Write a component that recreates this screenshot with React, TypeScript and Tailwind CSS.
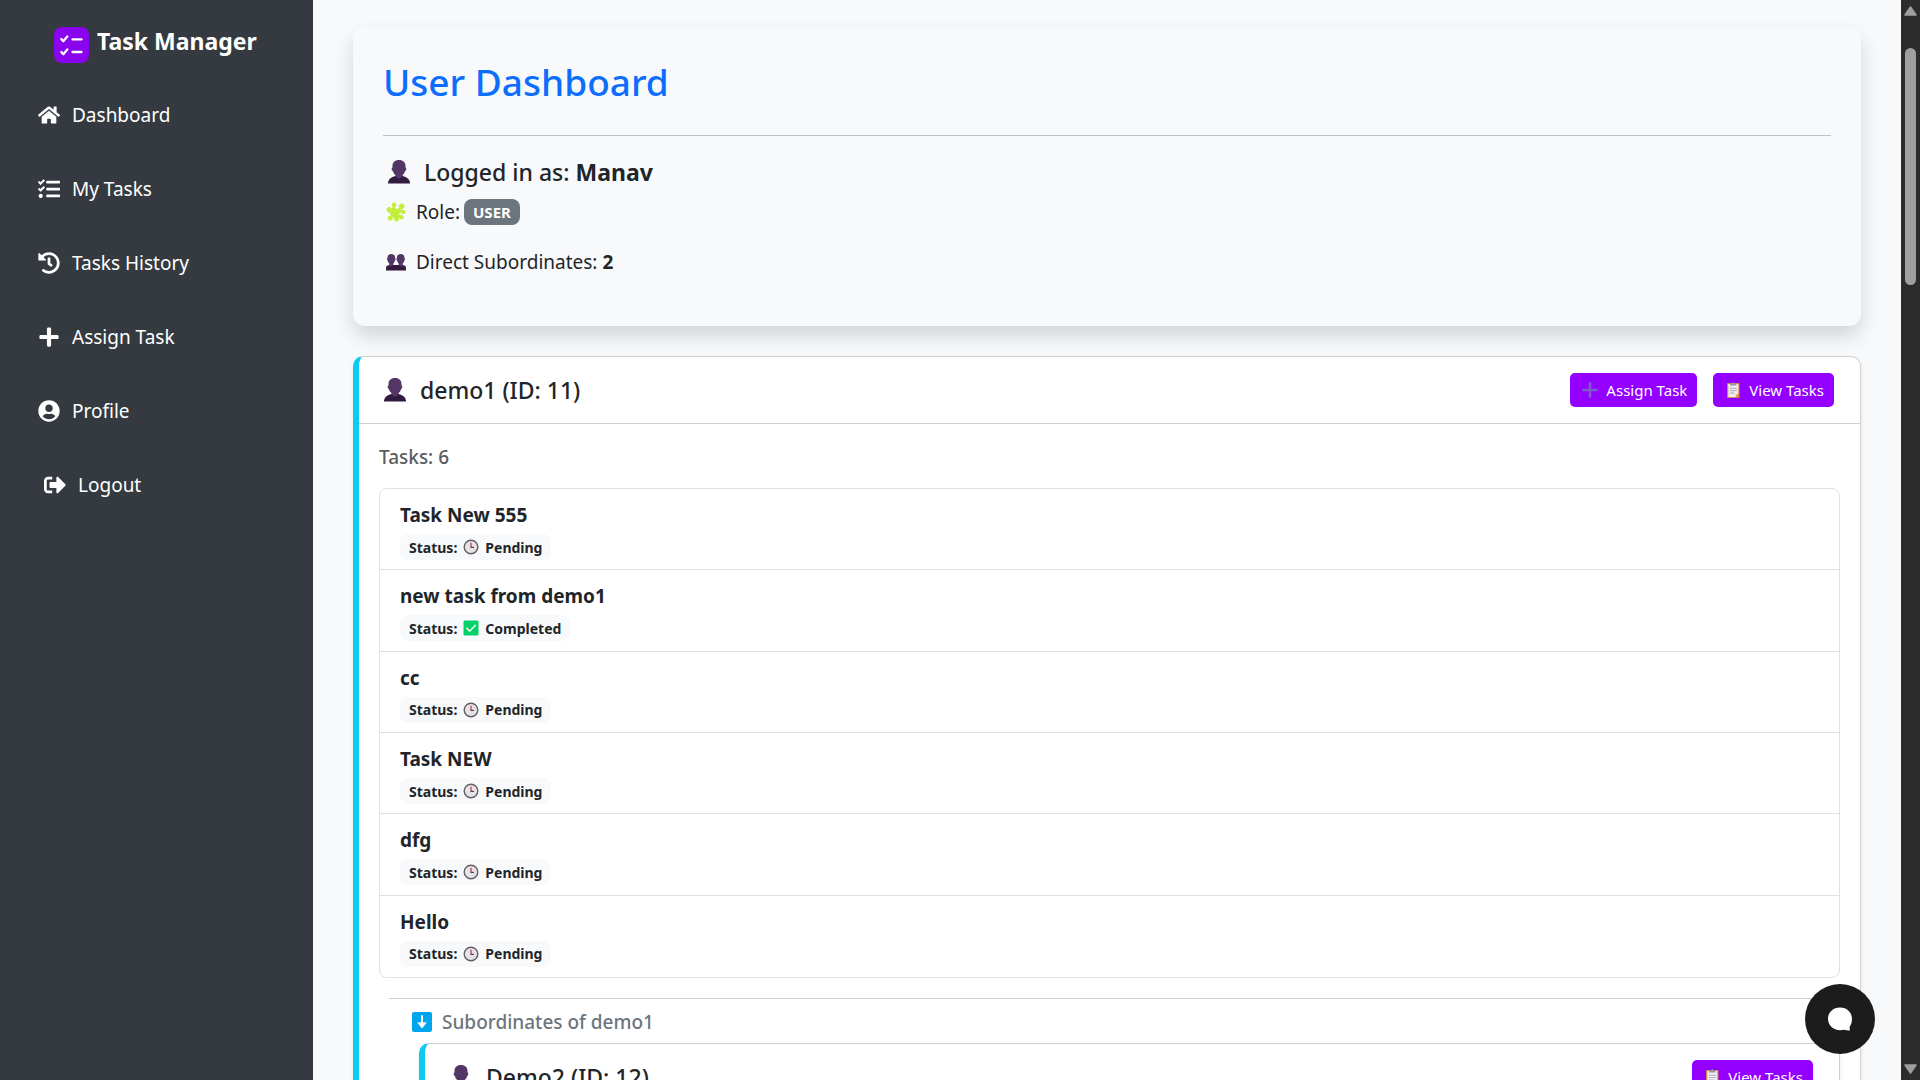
import type { ReactNode } from "react";
import { FaHome, FaTasks, FaHistory, FaPlus, FaUserCircle, FaSignOutAlt } from "react-icons/fa";

type StatusKind = "Pending" | "Completed";

const tasks: { title: string; status: StatusKind }[] = [
  { title: "Task New 555", status: "Pending" },
  { title: "new task from demo1", status: "Completed" },
  { title: "cc", status: "Pending" },
  { title: "Task NEW", status: "Pending" },
  { title: "dfg", status: "Pending" },
  { title: "Hello", status: "Pending" },
];

const links: { label: string; icon: ReactNode }[] = [
  { label: "Dashboard", icon: <FaHome /> },
  { label: "My Tasks", icon: <FaTasks /> },
  { label: "Tasks History", icon: <FaHistory /> },
  { label: "Assign Task", icon: <FaPlus /> },
  { label: "Profile", icon: <FaUserCircle /> },
];

function Logo() {
  return (
    <svg viewBox="0 0 36 36" className="size-9 shrink-0" aria-hidden="true">
      <rect width="35" height="36" rx="8" fill="#8a05ee" />
      <g fill="none" stroke="#fff" strokeWidth="2.300" strokeLinecap="round" strokeLinejoin="round">
        <path d="M7.300 12l2 2.200 4-4.800M7.300 25l2 2.200 4-4.800" />
        <path d="M18.500 12.400h9M18.500 25h9" />
      </g>
    </svg>
  );
}

function Person() {
  return (
    <svg viewBox="0 0 22 24" className="h-6 w-[22px] shrink-0" aria-hidden="true">
      <path d="M0 23.500c0-4 3.200-6.600 7.400-7.400h7.200c4.200.8 7.400 3.400 7.400 7.400z" fill="#321b41" />
      <path d="M11 0C6.800 0 4.500 2.400 4.500 6v1.600c-1.100 0-1.100 3.200.4 3.400.5 2 1.400 3.200 2.500 4.100v1.500L11 19l3.600-2.400v-1.500c1.100-.9 2-2.100 2.500-4.100 1.500-.2 1.500-3.400.4-3.400V6C17.500 2.400 15.200 0 11 0z" fill="#533566" />
    </svg>
  );
}

function People() {
  return (
    <svg viewBox="0 0 20 17" className="h-[17px] w-5 shrink-0" aria-hidden="true">
      <path d="M0 16.500v-2.500c0-2 1.500-3 4-3h12c2.500 0 4 1 4 3v2.500z" fill="#321b41" />
      <path d="M5.300 0C2.700 0 1.500 1.500 1.500 4c-.8.300-.6 2.200.2 2.400.3 1.400.8 2.300 1.600 3v1.800l2 1.600 2-1.600V9.400c.8-.7 1.300-1.600 1.600-3 .8-.2 1-2.100.2-2.400 0-2.500-1.200-4-3.800-4zM14.700 0c-2.600 0-3.800 1.500-3.800 4-.8.300-.6 2.200.2 2.400.3 1.400.8 2.300 1.600 3v1.800l2 1.600 2-1.600V9.400c.8-.7 1.300-1.600 1.600-3 .8-.2 1-2.100.2-2.400 0-2.500-1.200-4-3.800-4z" fill="#533566" />
    </svg>
  );
}

function Puzzle() {
  return (
    <svg viewBox="0 0 20 20" className="size-5 shrink-0" aria-hidden="true">
      <g fill="#c3ef3c">
        <rect x="4.500" y="4.500" width="11.500" height="11.500" rx="1.200" transform="rotate(38 10 10)" />
        <circle cx="8" cy="2.900" r="2.300" />
        <circle cx="15.700" cy="4.200" r="2.700" />
        <circle cx="3.200" cy="7.600" r="2.600" />
        <circle cx="4.300" cy="16" r="2.500" />
        <circle cx="10.500" cy="17.300" r="2.300" />
        <circle cx="15.500" cy="15.300" r="2.300" />
        <circle cx="17.500" cy="10" r="2.100" />
      </g>
      <g fill="#f8f9fa">
        <circle cx="11.200" cy="5.200" r="1.700" />
        <circle cx="14.400" cy="12" r="1.200" />
        <circle cx="3.400" cy="12.200" r="1.200" />
      </g>
    </svg>
  );
}

function Clock() {
  return (
    <svg viewBox="0 0 16 16" className="size-4 shrink-0" aria-hidden="true">
      <circle cx="8" cy="8" r="6.800" fill="#e6e3e6" stroke="#636063" strokeWidth="1.400" />
      <path d="M8 8.200V3.800" stroke="#cb3868" strokeWidth="1.300" />
      <path d="M7.500 8.400H11" stroke="#4a474a" strokeWidth="1.200" />
    </svg>
  );
}

function CheckBox() {
  return (
    <svg viewBox="0 0 16 16" className="size-4 shrink-0" aria-hidden="true">
      <rect x="0.500" y="0.500" width="15" height="15" rx="1.500" fill="#00d26a" />
      <path d="M3.800 8.200l2.900 2.900 5.700-5.800" fill="none" stroke="#f4f4f4" strokeWidth="1.500" strokeLinecap="round" strokeLinejoin="round" />
    </svg>
  );
}

function PlusGlyph() {
  return (
    <svg viewBox="0 0 16 16" className="size-4 shrink-0" aria-hidden="true">
      <path d="M8 1.400v13.200M1.400 8h13.200" stroke="#7d5bc9" strokeWidth="2.600" strokeLinecap="round" />
    </svg>
  );
}

function Clipboard() {
  return (
    <svg viewBox="0 0 16 16" className="size-4 shrink-0" aria-hidden="true">
      <rect x="2" y="1" width="12.500" height="15" rx="0.800" fill="#d6884a" />
      <path d="M3.300 2h10v9.800L10.700 15H3.300z" fill="#f1eef2" />
      <path d="M10.700 15v-3h2.600z" fill="#f0b56a" />
      <path d="M5 3.500V1.400h2L8.200 0l1.300 1.400h2v2.100z" fill="#9b93a3" />
      <path d="M4.800 6.300h7M4.800 8.700h7M4.800 11.100h4.500" stroke="#a8a4ae" strokeWidth="0.900" />
    </svg>
  );
}

function DownArrow() {
  return (
    <svg viewBox="0 0 20 20" className="size-5 shrink-0" aria-hidden="true">
      <rect width="20" height="20" rx="2" fill="#00a6ed" />
      <path d="M10 4v8" stroke="#fff" strokeWidth="2" strokeLinecap="round" />
      <path d="M5.800 10.800h8.400L10 16z" fill="#fff" stroke="#fff" strokeWidth="0.800" strokeLinejoin="round" />
    </svg>
  );
}

function ActionButton({ icon, label }: { icon: ReactNode; label: string }) {
  return (
    <button type="button" className="flex h-[34px] items-center gap-2 rounded-[5px] bg-[#9400ff] pr-2.5 pl-3 text-[15px] text-white">
      {icon}
      {label}
    </button>
  );
}

function CardHeader({ name, children }: { name: string; children: ReactNode }) {
  return (
    <header className="flex items-center justify-between border-b border-[#cfd0d1] py-4 pr-[26px] pl-[25px]">
      <h2 className="flex items-center gap-3.5 text-[23px] leading-[34px] font-medium">
        <Person />
        {name}
      </h2>
      <div className="flex gap-4">{children}</div>
    </header>
  );
}

function Card({ children }: { children: ReactNode }) {
  return (
    <section className="rounded-[10px] border border-l-[6px] border-[#cfd0d1] border-l-[#0dcaf0] bg-white shadow-[0_2px_5px_rgba(0,0,0,0.08)]">
      {children}
    </section>
  );
}

function Sidebar() {
  return (
    <aside className="w-[313px] shrink-0 bg-[#343a40] text-white">
      <div className="flex pt-[27px] pl-[54px]">
        <Logo />
        <span className="pl-[7px] text-[23px] leading-7 font-bold">Task Manager</span>
      </div>
      <nav className="mt-[15px] pl-[38px] text-[19px]">
        {links.map((link) => (
          <a key={link.label} href="#" className="flex h-[74px] items-center gap-3">
            <span className="text-[22px]">{link.icon}</span>
            {link.label}
          </a>
        ))}
        <button type="button" className="flex h-[74px] items-center gap-3 pl-1.5">
          <FaSignOutAlt className="text-[22px]" />
          Logout
        </button>
      </nav>
    </aside>
  );
}

function TaskList() {
  return (
    <ul className="mt-[18px] grid min-h-[490px] auto-rows-fr divide-y divide-[#dee2e6] rounded-lg border border-[#dee2e6]">
      {tasks.map((task) => (
        <li key={task.title} className="flex flex-col items-start gap-1 px-5 pt-[11px]">
          <span className="text-[19px] leading-[30px] font-bold">{task.title}</span>
          <span className="flex h-[26px] items-center gap-1.5 rounded-lg bg-[#f8f9fa] px-[9px] text-[14px] font-bold">
            Status:
            {task.status === "Pending" ? <Clock /> : <CheckBox />}
            {task.status}
          </span>
        </li>
      ))}
    </ul>
  );
}

function Scrollbar() {
  return (
    <div className="flex w-[19px] shrink-0 flex-col items-center justify-between bg-[#2c2c2c] py-1.5" aria-hidden="true">
      <div className="flex flex-col items-center gap-8">
        <svg viewBox="0 0 13 10" className="h-2.5 w-[13px]">
          <path d="M6.500 1L12 9H1z" fill="#9f9f9f" stroke="#9f9f9f" strokeWidth="1.500" strokeLinejoin="round" />
        </svg>
        <div className="h-[237px] w-[11px] rounded-full bg-[#9f9f9f]" />
      </div>
      <svg viewBox="0 0 13 10" className="h-2.5 w-[13px]">
        <path d="M6.500 9L12 1H1z" fill="#9f9f9f" stroke="#9f9f9f" strokeWidth="1.500" strokeLinejoin="round" />
      </svg>
    </div>
  );
}

export default function App() {
  return (
    <div className="flex h-screen overflow-hidden bg-[#f8f9fa] font-['Noto_Sans',sans-serif] text-[#212529]">
      <Sidebar />
      <main className="min-w-0 flex-1 overflow-hidden px-10 pt-[27px]">
        <section className="rounded-xl bg-[#f8f9fa] px-[30px] pt-[31px] pb-[49px] shadow-[0_10px_20px_rgba(0,0,0,0.15)]">
          <h1 className="text-[37px] leading-[48px] font-medium text-[#0d6efd]">User Dashboard</h1>
          <hr className="mt-[29px] mb-[21px] border-[#bfc1c4]" />
          <h2 className="flex items-center gap-3.5 pl-[5px] text-[23px] leading-[30px] font-medium">
            <Person />
            <span>
              Logged in as: <strong>Manav</strong>
            </span>
          </h2>
          <p className="mt-2.5 flex items-center gap-2.5 pl-[3px] text-[19px] leading-[30px]">
            <Puzzle />
            <span>Role:</span>
            <span className="-ml-1.5 flex h-[26px] items-center rounded-lg bg-[#6c757d] px-[9px] text-[15px] font-bold text-white">USER</span>
          </p>
          <p className="mt-5 flex items-center gap-2.5 pl-[3px] text-[19px] leading-[30px]">
            <People />
            <span>
              Direct Subordinates: <strong>2</strong>
            </span>
          </p>
        </section>

        <div className="mt-[30px]">
          <Card>
            <CardHeader name="demo1 (ID: 11)">
              <ActionButton icon={<PlusGlyph />} label="Assign Task" />
              <ActionButton icon={<Clipboard />} label="View Tasks" />
            </CardHeader>
            <div className="p-5">
              <h3 className="text-[19px] leading-[26px] font-medium text-[#595c5f]">Tasks: 6</h3>
              <TaskList />
              <div className="mt-5 ml-2.5 border-t border-[#cfd0d1] pt-2.5">
                <h3 className="flex items-center gap-2.5 pl-[23px] text-[19px] leading-[26px] font-medium text-[#6c757d]">
                  <DownArrow />
                  Subordinates of demo1
                </h3>
                <div className="mt-2 ml-[30px]">
                  <Card>
                    <CardHeader name="Demo2 (ID: 12)">
                      <ActionButton icon={<Clipboard />} label="View Tasks" />
                    </CardHeader>
                  </Card>
                </div>
              </div>
            </div>
          </Card>
        </div>
      </main>
      <Scrollbar />
      <button
        type="button"
        aria-label="Open chat"
        className="fixed right-[45px] bottom-[26px] flex size-[70px] items-center justify-center rounded-full bg-[#1c1c1c]"
      >
        <svg viewBox="0 0 24 24" className="size-6" aria-hidden="true">
          <path d="M12 .5C5.300.5 0 5.300 0 11.800s5.300 11.400 12 11.400c1.400 0 2.700 0 4-.4 1.700.6 4 .9 6 .8-.4-1.200-.5-2.500-.3-3.800 1.500-2 2.300-4.700 2.300-8C24 5.300 18.700.5 12 .5z" fill="#fff" />
        </svg>
      </button>
    </div>
  );
}
